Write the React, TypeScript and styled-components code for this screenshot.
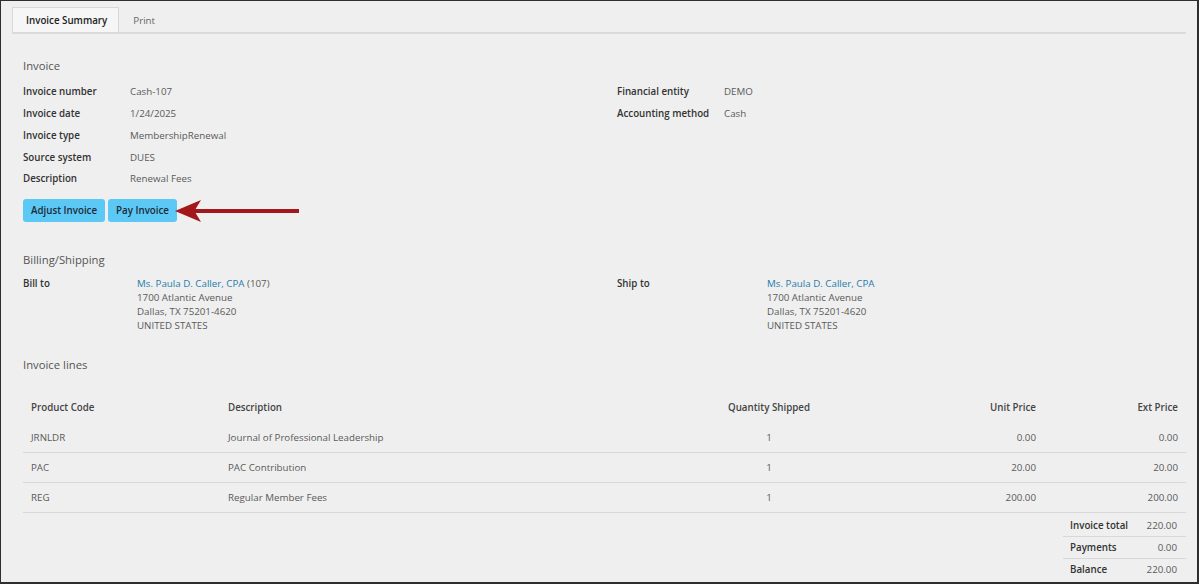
import styled, { createGlobalStyle } from "styled-components";

const Global = createGlobalStyle`
  html, body {
    margin: 0;
    padding: 0;
    background: #efefef;
    font-family: "Open Sans", "Noto Sans", sans-serif;
  }
`;

const Frame = styled.div`
  width: 1199px;
  height: 584px;
  box-sizing: border-box;
  background: #efefef;
  border-left: 1px solid #2e2e2e;
  border-top: 1px solid #2e2e2e;
  border-right: 2px solid #2e2e2e;
  border-bottom: 2px solid #2e2e2e;
  overflow: hidden;
  font-size: 9.75px;
  color: #555;
`;

const TabBar = styled.div`
  display: flex;
  margin: 6px 11px 0 11px;
  border-bottom: 2px solid #dadada;
  height: 25px;
`;

const Tab = styled.div<{ $active?: boolean }>`
  display: flex;
  align-items: center;
  padding: 0 11px 0 13px;
  height: 25px;
  box-sizing: border-box;
  font-size: 9.75px;
  font-weight: ${(p) => (p.$active ? 600 : 400)};
  color: ${(p) => (p.$active ? "#222" : "#666")};
  background: ${(p) => (p.$active ? "#f6f6f6" : "transparent")};
  border: 1px solid ${(p) => (p.$active ? "#d8d8d8" : "transparent")};
  border-bottom: none;
`;

const Content = styled.div`
  padding: 22px 11px 0 22px;
`;

const Heading = styled.div<{ $gap?: number }>`
  font-size: 11.3px;
  line-height: 20px;
  color: #555;
  margin-top: ${(p) => p.$gap ?? 0}px;
`;

const TwoCol = styled.div`
  display: grid;
  grid-template-columns: 594px 1fr;
`;

const FieldList = styled.div<{ $gap?: number }>`
  display: flex;
  flex-direction: column;
  margin-top: ${(p) => p.$gap ?? 5}px;
`;

const Field = styled.div<{ $labelWidth: number }>`
  display: grid;
  grid-template-columns: ${(p) => p.$labelWidth}px 1fr;
  height: 21.75px;
  align-items: center;
`;

const Label = styled.div`
  font-weight: 600;
  color: #333;
`;

const Value = styled.div`
  color: #5a5a5a;
`;

const Buttons = styled.div`
  display: flex;
  gap: 3px;
  margin-top: 9px;
  position: relative;
`;

const Button = styled.button`
  height: 23px;
  padding: 0 8px;
  border: none;
  border-radius: 3px;
  background: #5cc8f5;
  color: #1d2b36;
  font-family: "Open Sans", "Noto Sans", sans-serif;
  font-size: 9.75px;
  font-weight: 600;
`;

const Arrow = styled.svg`
  position: absolute;
  left: 150px;
  top: 0px;
`;

const Address = styled.div<{ $labelWidth: number }>`
  display: grid;
  grid-template-columns: ${(p) => p.$labelWidth}px 1fr;
  line-height: 14px;
`;

const AddressLines = styled.div`
  display: flex;
  flex-direction: column;
  color: #5a5a5a;
`;

const Link = styled.span`
  color: #1f7dab;
`;

const Table = styled.div`
  margin-top: 18px;
  display: flex;
  flex-direction: column;
`;

const cols = "197px 416px 266px 142px 142px";

const Row = styled.div<{ $head?: boolean }>`
  display: grid;
  grid-template-columns: ${cols};
  height: 30px;
  align-items: center;
  box-sizing: border-box;
  border-bottom: ${(p) => (p.$head ? "none" : "1px solid #d8d8d8")};
  font-weight: ${(p) => (p.$head ? 600 : 400)};
  color: ${(p) => (p.$head ? "#444" : "#5a5a5a")};
`;

const Cell = styled.div<{ $align?: "left" | "center" | "right" }>`
  padding: 0 8px;
  text-align: ${(p) => p.$align ?? "left"};
  white-space: nowrap;
`;

const Totals = styled.div`
  align-self: flex-end;
  width: 123px;
  margin-top: 2px;
  display: flex;
  flex-direction: column;
`;

const TotalRow = styled.div<{ $last?: boolean }>`
  display: flex;
  justify-content: space-between;
  align-items: center;
  height: 22px;
  box-sizing: border-box;
  padding: 0 9px 0 7px;
  border-bottom: ${(p) => (p.$last ? "none" : "1px solid #d8d8d8")};
`;

const lines = [
  { code: "JRNLDR", desc: "Journal of Professional Leadership", qty: "1", unit: "0.00", ext: "0.00" },
  { code: "PAC", desc: "PAC Contribution", qty: "1", unit: "20.00", ext: "20.00" },
  { code: "REG", desc: "Regular Member Fees", qty: "1", unit: "200.00", ext: "200.00" },
];

const address = ["1700 Atlantic Avenue", "Dallas, TX 75201-4620", "UNITED STATES"];

export default function App() {
  return (
    <>
      <Global />
      <Frame>
        <TabBar>
          <Tab $active>Invoice Summary</Tab>
          <Tab>Print</Tab>
        </TabBar>
        <Content>
          <Heading>Invoice</Heading>
          <TwoCol>
            <FieldList>
              <Field $labelWidth={107}><Label>Invoice number</Label><Value>Cash-107</Value></Field>
              <Field $labelWidth={107}><Label>Invoice date</Label><Value>1/24/2025</Value></Field>
              <Field $labelWidth={107}><Label>Invoice type</Label><Value>MembershipRenewal</Value></Field>
              <Field $labelWidth={107}><Label>Source system</Label><Value>DUES</Value></Field>
              <Field $labelWidth={107}><Label>Description</Label><Value>Renewal Fees</Value></Field>
            </FieldList>
            <FieldList>
              <Field $labelWidth={107}><Label>Financial entity</Label><Value>DEMO</Value></Field>
              <Field $labelWidth={107}><Label>Accounting method</Label><Value>Cash</Value></Field>
            </FieldList>
          </TwoCol>
          <Buttons>
            <Button>Adjust Invoice</Button>
            <Button>Pay Invoice</Button>
            <Arrow width="130" height="24" viewBox="0 0 130 24">
              <rect x="20" y="10" width="106" height="4" fill="#a3161c" />
              <path d="M2 12 L28 1 L22 11 L22 13 L28 23 Z" fill="#a3161c" />
            </Arrow>
          </Buttons>

          <Heading $gap={28}>Billing/Shipping</Heading>
          <TwoCol>
            <FieldList $gap={7}>
              <Address $labelWidth={114}>
                <Label>Bill to</Label>
                <AddressLines>
                  <div><Link>Ms. Paula D. Caller, CPA</Link> (107)</div>
                  {address.map((a) => <div key={a}>{a}</div>)}
                </AddressLines>
              </Address>
            </FieldList>
            <FieldList $gap={7}>
              <Address $labelWidth={150}>
                <Label>Ship to</Label>
                <AddressLines>
                  <div><Link>Ms. Paula D. Caller, CPA</Link></div>
                  {address.map((a) => <div key={a}>{a}</div>)}
                </AddressLines>
              </Address>
            </FieldList>
          </TwoCol>

          <Heading $gap={22}>Invoice lines</Heading>
          <Table>
            <Row $head>
              <Cell>Product Code</Cell>
              <Cell>Description</Cell>
              <Cell $align="center">Quantity Shipped</Cell>
              <Cell $align="right">Unit Price</Cell>
              <Cell $align="right">Ext Price</Cell>
            </Row>
            {lines.map((l) => (
              <Row key={l.code}>
                <Cell>{l.code}</Cell>
                <Cell>{l.desc}</Cell>
                <Cell $align="center">{l.qty}</Cell>
                <Cell $align="right">{l.unit}</Cell>
                <Cell $align="right">{l.ext}</Cell>
              </Row>
            ))}
            <Totals>
              <TotalRow><Label>Invoice total</Label><Value>220.00</Value></TotalRow>
              <TotalRow><Label>Payments</Label><Value>0.00</Value></TotalRow>
              <TotalRow $last><Label>Balance</Label><Value>220.00</Value></TotalRow>
            </Totals>
          </Table>
        </Content>
      </Frame>
    </>
  );
}
